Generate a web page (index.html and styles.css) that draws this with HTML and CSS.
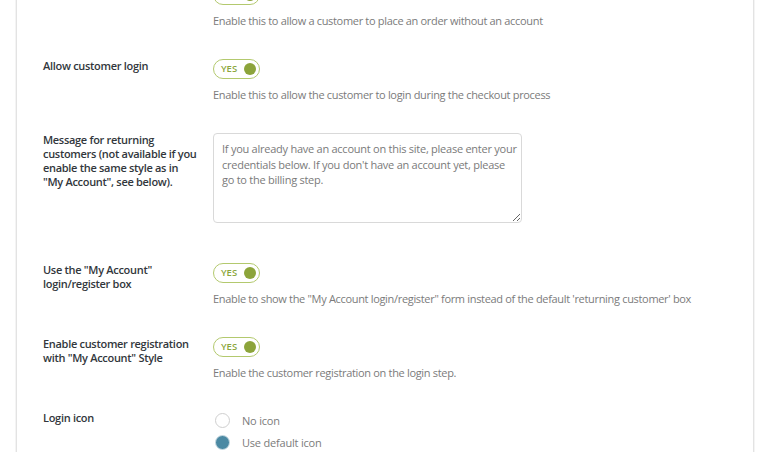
FILE: index.html
```html
<!DOCTYPE html>
<html lang="en">
<head>
<meta charset="utf-8">
<title>Login settings</title>
<link rel="stylesheet" href="styles.css">
</head>
<body>
<div class="panel">
  <div class="row">
    <div class="label">Allow guest checkout</div>
    <div class="control">
      <span class="toggle"><span class="toggle-text">YES</span><span class="knob"></span></span>
      <p class="desc">Enable this to allow a customer to place an order without an account</p>
    </div>
  </div>
  <div class="row">
    <div class="label">Allow customer login</div>
    <div class="control">
      <span class="toggle"><span class="toggle-text">YES</span><span class="knob"></span></span>
      <p class="desc">Enable this to allow the customer to login during the checkout process</p>
    </div>
  </div>
  <div class="row row-text">
    <div class="label">Message for returning customers (not available if you enable the same style as in "My Account", see below).</div>
    <div class="control">
      <textarea class="textarea">If you already have an account on this site, please enter your credentials below. If you don't have an account yet, please go to the billing step.</textarea>
    </div>
  </div>
  <div class="row">
    <div class="label">Use the "My Account" login/register box</div>
    <div class="control">
      <span class="toggle"><span class="toggle-text">YES</span><span class="knob"></span></span>
      <p class="desc">Enable to show the "My Account login/register" form instead of the default 'returning customer' box</p>
    </div>
  </div>
  <div class="row">
    <div class="label">Enable customer registration with "My Account" Style</div>
    <div class="control">
      <span class="toggle"><span class="toggle-text">YES</span><span class="knob"></span></span>
      <p class="desc">Enable the customer registration on the login step.</p>
    </div>
  </div>
  <div class="row">
    <div class="label">Login icon</div>
    <div class="control radios">
      <label class="radio"><span class="dot"></span>No icon</label>
      <label class="radio"><span class="dot checked"></span>Use default icon</label>
      <label class="radio"><span class="dot"></span>Custom icon</label>
    </div>
  </div>
</div>
</body>
</html>
```

FILE: styles.css
```css
html, body {
  margin: 0;
  padding: 0;
  background: #ffffff;
  overflow: hidden;
}
body {
  font-family: "Open Sans", "Noto Sans", sans-serif;
  color: #32373c;
}
.panel {
  margin: -30px 15px 0 16px;
  border-left: 1px solid #e3e3e3;
  border-right: 1px solid #e3e3e3;
  box-shadow: -1px 0 0 #f4f4f4, 1px 0 0 #f4f4f4;
  background: #fff;
  padding: 0 0 0 26px;
}
.row {
  display: flex;
  padding: 15px 0;
}
.row-text {
  padding-bottom: 25px;
}
.label {
  width: 155px;
  padding-right: 15px;
  flex-shrink: 0;
  font-size: 11px;
  line-height: 14px;
  font-weight: 600;
  letter-spacing: -0.3px;
  color: #32373c;
}
.control {
  flex: 1;
  display: flex;
  flex-direction: column;
  align-items: flex-start;
}
.toggle {
  box-sizing: border-box;
  width: 47px;
  height: 20px;
  border: 1.5px solid #b3c96e;
  border-radius: 10px;
  display: flex;
  align-items: center;
  justify-content: space-between;
  padding: 0 3px 0 7px;
}
.toggle-text {
  font-size: 9.5px;
  font-weight: 600;
  color: #8ca63c;
  line-height: 12px;
}
.knob {
  width: 12px;
  height: 12px;
  border-radius: 50%;
  background: #8ca43a;
}
.desc {
  margin: 8px 0 0;
  font-size: 11px;
  line-height: 16px;
  letter-spacing: -0.32px;
  color: #7b7b7b;
}
.textarea {
  box-sizing: border-box;
  width: 309px;
  height: 90px;
  border: 1px solid #d9d9d9;
  border-radius: 4px;
  padding: 7px 2px 7px 8px;
  font-family: inherit;
  font-size: 11px;
  letter-spacing: -0.25px;
  line-height: 15.5px;
  color: #7a7a7a;
  resize: vertical;
  overflow: hidden;
  margin: 0;
}
.radios {
  gap: 7px;
  padding-top: 2px;
}
.radio {
  display: flex;
  align-items: center;
  font-size: 11px;
  letter-spacing: -0.2px;
  line-height: 15px;
  color: #7b7b7b;
}
.dot {
  box-sizing: border-box;
  width: 15px;
  height: 15px;
  border-radius: 50%;
  border: 1px solid #cfcfcf;
  margin: 0 12px 0 2px;
  background: #fff;
}
.dot.checked {
  background: #4b89a3;
  border-color: #c9dbe3;
}
```
